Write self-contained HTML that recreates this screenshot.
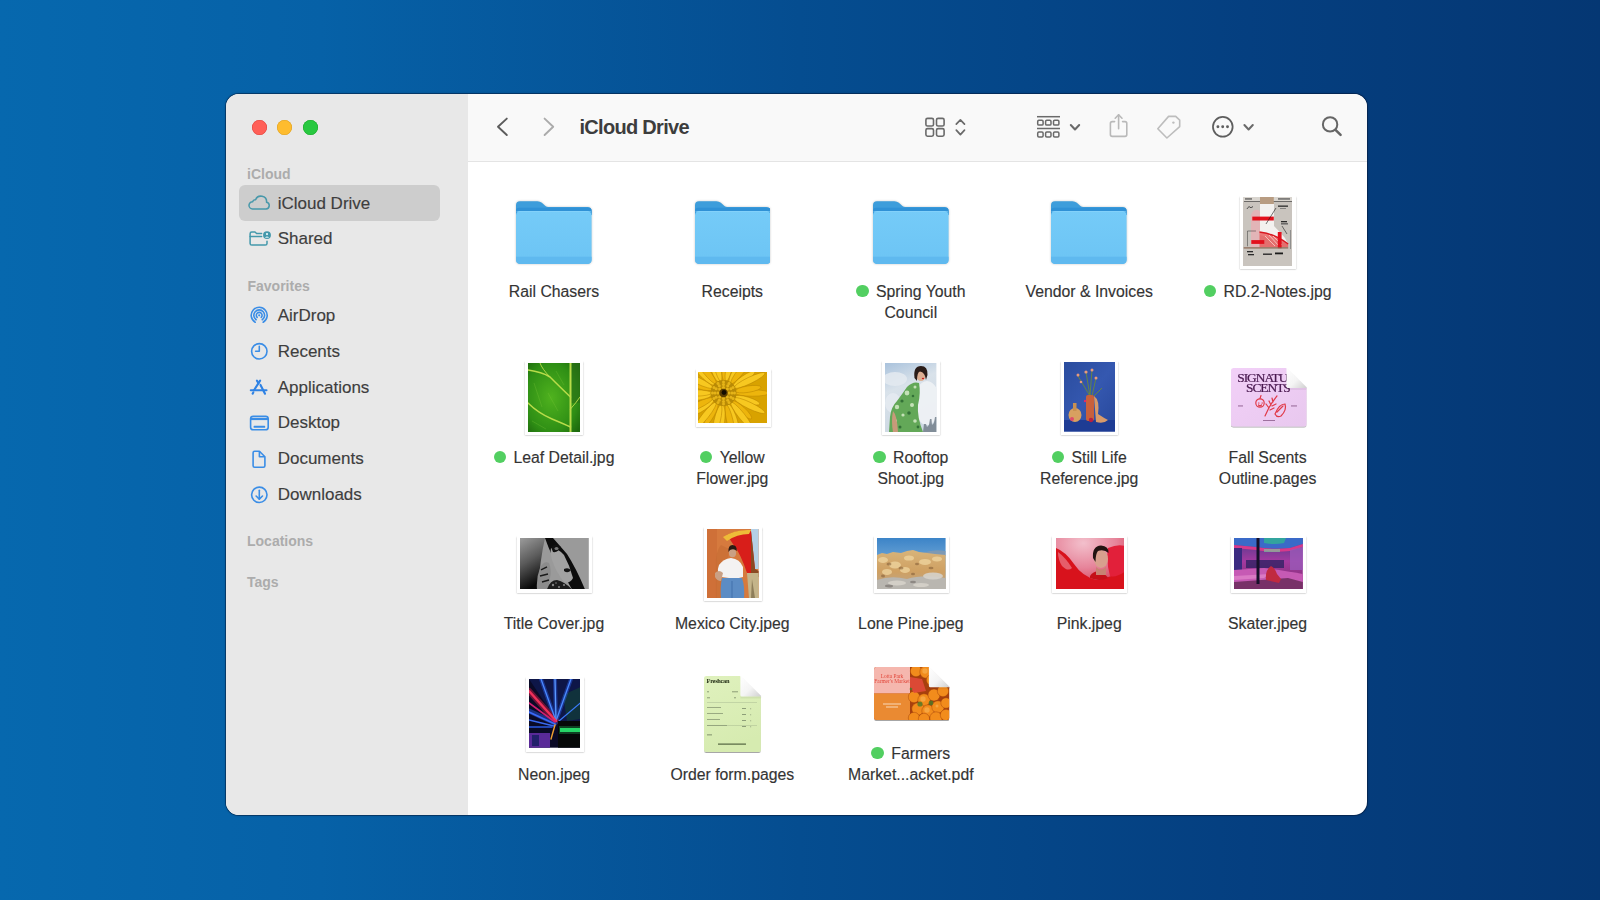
<!DOCTYPE html>
<html><head><meta charset="utf-8"><title>iCloud Drive</title>
<style>
html,body{margin:0;padding:0;width:1600px;height:900px;overflow:hidden;}
body{background:linear-gradient(90deg,#0668ae 0%,#0661a7 20%,#054d90 50%,#053f80 78%,#053773 100%);font-family:"Liberation Sans", sans-serif;position:relative;}
.t{position:absolute;white-space:nowrap;font-family:"Liberation Sans", sans-serif;}
.s{-webkit-text-stroke:0.15px currentColor;}
.abs{position:absolute;}
#win{position:absolute;left:226px;top:94px;width:1141px;height:721px;border-radius:13px;overflow:hidden;background:#fff;box-shadow:0 0 0 1px rgba(5,20,45,.42),0 0 2px 1px rgba(5,20,45,.2);}
#sb{position:absolute;left:0;top:0;width:242px;height:721px;background:#e8e8e8;}
#tb{position:absolute;left:242px;top:0;right:0;height:67px;background:#f9f9f9;border-bottom:1px solid #e4e4e4;}
.ph{position:absolute;background:#fff;box-shadow:0 0.5px 1.5px rgba(0,0,0,.35);}
.ph svg{position:absolute;left:3px;top:3px;}
.dot{position:absolute;width:12.5px;height:12.5px;border-radius:50%;background:#53cf62;}
</style></head><body>
<div id="win"><div id="sb"></div><div id="tb"></div></div><div class="abs" style="left:251.8px;top:119.8px;width:15px;height:15px;border-radius:50%;background:#ff5f57;box-shadow:inset 0 0 0 0.6px #e0443e;"></div><div class="abs" style="left:277.3px;top:119.8px;width:15px;height:15px;border-radius:50%;background:#febc2e;box-shadow:inset 0 0 0 0.6px #dea123;"></div><div class="abs" style="left:302.9px;top:119.8px;width:15px;height:15px;border-radius:50%;background:#28c840;box-shadow:inset 0 0 0 0.6px #1aab29;"></div><div class="abs" style="left:239px;top:185px;width:201px;height:35.5px;border-radius:6px;background:#cdcdcd;"></div><div class="t" style="left:247.00px;top:164.55px;font-size:14px;line-height:18px;color:#acacac;font-weight:700;">iCloud</div><div class="t s" style="left:277.70px;top:192.71px;font-size:17px;line-height:22px;color:#3e3e3e;font-weight:400;">iCloud Drive</div><div class="t s" style="left:277.70px;top:228.41px;font-size:17px;line-height:22px;color:#3e3e3e;font-weight:400;">Shared</div><div class="t" style="left:247.50px;top:276.75px;font-size:14px;line-height:18px;color:#acacac;font-weight:700;">Favorites</div><div class="t s" style="left:277.70px;top:305.41px;font-size:17px;line-height:22px;color:#3e3e3e;font-weight:400;">AirDrop</div><div class="t s" style="left:277.70px;top:341.06px;font-size:17px;line-height:22px;color:#3e3e3e;font-weight:400;">Recents</div><div class="t s" style="left:277.70px;top:376.71px;font-size:17px;line-height:22px;color:#3e3e3e;font-weight:400;">Applications</div><div class="t s" style="left:277.70px;top:412.36px;font-size:17px;line-height:22px;color:#3e3e3e;font-weight:400;">Desktop</div><div class="t s" style="left:277.70px;top:448.01px;font-size:17px;line-height:22px;color:#3e3e3e;font-weight:400;">Documents</div><div class="t s" style="left:277.70px;top:483.66px;font-size:17px;line-height:22px;color:#3e3e3e;font-weight:400;">Downloads</div><div class="t" style="left:247.00px;top:532.35px;font-size:14px;line-height:18px;color:#acacac;font-weight:700;">Locations</div><div class="t" style="left:247.00px;top:572.95px;font-size:14px;line-height:18px;color:#acacac;font-weight:700;">Tags</div><div class="t" style="left:579.50px;top:113.97px;font-size:20px;line-height:26px;color:#3d3d3d;font-weight:700;letter-spacing:-0.7px;">iCloud Drive</div><svg class="abs" style="left:516.20px;top:201.30px;filter:drop-shadow(0 0.6px 0.8px rgba(0,0,0,.22))" width="75.6" height="63.2" viewBox="0 0 76 63.2"><defs><linearGradient id="fb" x1="0" y1="0" x2="0" y2="1"><stop offset="0" stop-color="#75cbf8"/><stop offset="1" stop-color="#6cc4f4"/></linearGradient></defs><path d="M0,4 Q0,0 4,0 H21.5 Q24.2,0 26,1.6 L29.6,4.8 Q30.8,5.8 32.4,5.8 H71.8 Q76,5.8 76,10 V14 H0 Z" fill="#3d9ddb"/><path d="M0,9.5 Q0,6.5 3,6.5 H73 Q76,6.5 76,9.5 V14 H0 Z" fill="#2f91d6"/><rect x="0" y="10" width="76" height="53.2" rx="4.2" fill="url(#fb)"/><path d="M0,55.8 H76 V59 Q76,63.2 71.8,63.2 H4.2 Q0,63.2 0,59 Z" fill="#5fb9ef"/><rect x="0.5" y="10" width="75" height="0.8" fill="#8fd6fb" opacity="0.7"/></svg><svg class="abs" style="left:694.50px;top:201.30px;filter:drop-shadow(0 0.6px 0.8px rgba(0,0,0,.22))" width="75.6" height="63.2" viewBox="0 0 76 63.2"><defs><linearGradient id="fb" x1="0" y1="0" x2="0" y2="1"><stop offset="0" stop-color="#75cbf8"/><stop offset="1" stop-color="#6cc4f4"/></linearGradient></defs><path d="M0,4 Q0,0 4,0 H21.5 Q24.2,0 26,1.6 L29.6,4.8 Q30.8,5.8 32.4,5.8 H71.8 Q76,5.8 76,10 V14 H0 Z" fill="#3d9ddb"/><path d="M0,9.5 Q0,6.5 3,6.5 H73 Q76,6.5 76,9.5 V14 H0 Z" fill="#2f91d6"/><rect x="0" y="10" width="76" height="53.2" rx="4.2" fill="url(#fb)"/><path d="M0,55.8 H76 V59 Q76,63.2 71.8,63.2 H4.2 Q0,63.2 0,59 Z" fill="#5fb9ef"/><rect x="0.5" y="10" width="75" height="0.8" fill="#8fd6fb" opacity="0.7"/></svg><svg class="abs" style="left:873.00px;top:201.30px;filter:drop-shadow(0 0.6px 0.8px rgba(0,0,0,.22))" width="75.6" height="63.2" viewBox="0 0 76 63.2"><defs><linearGradient id="fb" x1="0" y1="0" x2="0" y2="1"><stop offset="0" stop-color="#75cbf8"/><stop offset="1" stop-color="#6cc4f4"/></linearGradient></defs><path d="M0,4 Q0,0 4,0 H21.5 Q24.2,0 26,1.6 L29.6,4.8 Q30.8,5.8 32.4,5.8 H71.8 Q76,5.8 76,10 V14 H0 Z" fill="#3d9ddb"/><path d="M0,9.5 Q0,6.5 3,6.5 H73 Q76,6.5 76,9.5 V14 H0 Z" fill="#2f91d6"/><rect x="0" y="10" width="76" height="53.2" rx="4.2" fill="url(#fb)"/><path d="M0,55.8 H76 V59 Q76,63.2 71.8,63.2 H4.2 Q0,63.2 0,59 Z" fill="#5fb9ef"/><rect x="0.5" y="10" width="75" height="0.8" fill="#8fd6fb" opacity="0.7"/></svg><svg class="abs" style="left:1051.40px;top:201.30px;filter:drop-shadow(0 0.6px 0.8px rgba(0,0,0,.22))" width="75.6" height="63.2" viewBox="0 0 76 63.2"><defs><linearGradient id="fb" x1="0" y1="0" x2="0" y2="1"><stop offset="0" stop-color="#75cbf8"/><stop offset="1" stop-color="#6cc4f4"/></linearGradient></defs><path d="M0,4 Q0,0 4,0 H21.5 Q24.2,0 26,1.6 L29.6,4.8 Q30.8,5.8 32.4,5.8 H71.8 Q76,5.8 76,10 V14 H0 Z" fill="#3d9ddb"/><path d="M0,9.5 Q0,6.5 3,6.5 H73 Q76,6.5 76,9.5 V14 H0 Z" fill="#2f91d6"/><rect x="0" y="10" width="76" height="53.2" rx="4.2" fill="url(#fb)"/><path d="M0,55.8 H76 V59 Q76,63.2 71.8,63.2 H4.2 Q0,63.2 0,59 Z" fill="#5fb9ef"/><rect x="0.5" y="10" width="75" height="0.8" fill="#8fd6fb" opacity="0.7"/></svg><div class="t s" style="left:354.00px;width:400px;text-align:center;top:282.08px;font-size:15.8px;line-height:20.5px;color:#343434;font-weight:400;">Rail Chasers</div><div class="t s" style="left:532.30px;width:400px;text-align:center;top:282.08px;font-size:15.8px;line-height:20.5px;color:#343434;font-weight:400;">Receipts</div><div class="t s" style="left:710.8px;width:400px;text-align:center;top:282.08px;font-size:15.8px;line-height:20.5px;color:#343434;"><span style="display:inline-block;width:12.5px;height:12.5px;border-radius:50%;background:#52cf61;margin-right:7.4px;vertical-align:0px;"></span>Spring Youth</div><div class="t s" style="left:710.80px;width:400px;text-align:center;top:302.58px;font-size:15.8px;line-height:20.5px;color:#343434;font-weight:400;">Council</div><div class="t s" style="left:889.20px;width:400px;text-align:center;top:282.08px;font-size:15.8px;line-height:20.5px;color:#343434;font-weight:400;">Vendor &amp; Invoices</div><div class="t s" style="left:1067.6px;width:400px;text-align:center;top:282.08px;font-size:15.8px;line-height:20.5px;color:#343434;"><span style="display:inline-block;width:12.5px;height:12.5px;border-radius:50%;background:#52cf61;margin-right:7.4px;vertical-align:0px;"></span>RD.2-Notes.jpg</div><div class="t s" style="left:354px;width:400px;text-align:center;top:448.08px;font-size:15.8px;line-height:20.5px;color:#343434;"><span style="display:inline-block;width:12.5px;height:12.5px;border-radius:50%;background:#52cf61;margin-right:7.4px;vertical-align:0px;"></span>Leaf Detail.jpg</div><div class="t s" style="left:532.3px;width:400px;text-align:center;top:448.08px;font-size:15.8px;line-height:20.5px;color:#343434;"><span style="display:inline-block;width:12.5px;height:12.5px;border-radius:50%;background:#52cf61;margin-right:7.4px;vertical-align:0px;"></span>Yellow</div><div class="t s" style="left:532.30px;width:400px;text-align:center;top:468.58px;font-size:15.8px;line-height:20.5px;color:#343434;font-weight:400;">Flower.jpg</div><div class="t s" style="left:710.8px;width:400px;text-align:center;top:448.08px;font-size:15.8px;line-height:20.5px;color:#343434;"><span style="display:inline-block;width:12.5px;height:12.5px;border-radius:50%;background:#52cf61;margin-right:7.4px;vertical-align:0px;"></span>Rooftop</div><div class="t s" style="left:710.80px;width:400px;text-align:center;top:468.58px;font-size:15.8px;line-height:20.5px;color:#343434;font-weight:400;">Shoot.jpg</div><div class="t s" style="left:889.2px;width:400px;text-align:center;top:448.08px;font-size:15.8px;line-height:20.5px;color:#343434;"><span style="display:inline-block;width:12.5px;height:12.5px;border-radius:50%;background:#52cf61;margin-right:7.4px;vertical-align:0px;"></span>Still Life</div><div class="t s" style="left:889.20px;width:400px;text-align:center;top:468.58px;font-size:15.8px;line-height:20.5px;color:#343434;font-weight:400;">Reference.jpg</div><div class="t s" style="left:1067.60px;width:400px;text-align:center;top:448.08px;font-size:15.8px;line-height:20.5px;color:#343434;font-weight:400;">Fall Scents</div><div class="t s" style="left:1067.60px;width:400px;text-align:center;top:468.58px;font-size:15.8px;line-height:20.5px;color:#343434;font-weight:400;">Outline.pages</div><div class="t s" style="left:354.00px;width:400px;text-align:center;top:614.08px;font-size:15.8px;line-height:20.5px;color:#343434;font-weight:400;">Title Cover.jpg</div><div class="t s" style="left:532.30px;width:400px;text-align:center;top:614.08px;font-size:15.8px;line-height:20.5px;color:#343434;font-weight:400;">Mexico City.jpeg</div><div class="t s" style="left:710.80px;width:400px;text-align:center;top:614.08px;font-size:15.8px;line-height:20.5px;color:#343434;font-weight:400;">Lone Pine.jpeg</div><div class="t s" style="left:889.20px;width:400px;text-align:center;top:614.08px;font-size:15.8px;line-height:20.5px;color:#343434;font-weight:400;">Pink.jpeg</div><div class="t s" style="left:1067.60px;width:400px;text-align:center;top:614.08px;font-size:15.8px;line-height:20.5px;color:#343434;font-weight:400;">Skater.jpeg</div><div class="t s" style="left:354.00px;width:400px;text-align:center;top:764.68px;font-size:15.8px;line-height:20.5px;color:#343434;font-weight:400;">Neon.jpeg</div><div class="t s" style="left:532.30px;width:400px;text-align:center;top:764.68px;font-size:15.8px;line-height:20.5px;color:#343434;font-weight:400;">Order form.pages</div><div class="t s" style="left:710.8px;width:400px;text-align:center;top:744.18px;font-size:15.8px;line-height:20.5px;color:#343434;"><span style="display:inline-block;width:12.5px;height:12.5px;border-radius:50%;background:#52cf61;margin-right:7.4px;vertical-align:0px;"></span>Farmers</div><div class="t s" style="left:710.80px;width:400px;text-align:center;top:764.68px;font-size:15.8px;line-height:20.5px;color:#343434;font-weight:400;">Market...acket.pdf</div><div class="ph" style="left:1240.10px;top:196.20px;width:55.60px;height:73.30px;"><div style="position:absolute;left:3.20px;top:1.00px;width:49.20px;height:68.50px;overflow:hidden"><svg style="position:absolute;left:0;top:0;filter:blur(0.35px)" width="49.20" height="68.50" viewBox="0 0 49.20 68.50" preserveAspectRatio="none"><rect width="50" height="69" fill="#c9c4be"/><rect x="0" y="0" width="50" height="4.3" fill="#d9d5cf"/><rect x="1" y="4.2" width="48" height="0.6" fill="#2a2a2a"/><rect x="2" y="1.4" width="7" height="1.1" fill="#444"/><rect x="35" y="1.4" width="12" height="1.1" fill="#444"/><rect x="17" y="0" width="13.8" height="7.5" fill="#b89c82"/><path d="M8,18 Q10,12 15,13 Q18,14 18,20 L18,50.3 H8 Z" fill="#e6b2b6" opacity="0.85"/><path d="M17,7 H31 V29 Q37,35 42,41 L45,47 Q30,42 17,38 Z" fill="#f3f1ef"/><path d="M16.5,35 Q30,36 45.2,47 L45.2,50.3 H16.5 Z" fill="#ea5a5a" opacity="0.8"/><path d="M16.5,35 Q30,36 45.2,47" stroke="#d81820" stroke-width="1.4" fill="none"/><path d="M22,39 L32,49 M26,38 L36,49 M30,39 L39,48" stroke="#f8c8c0" stroke-width="0.9"/><rect x="9.3" y="19.6" width="21.5" height="3.9" fill="#e2101c"/><rect x="8.3" y="43.1" width="13" height="3.8" fill="#e2101c"/><rect x="34.8" y="35" width="3.8" height="16.2" fill="#e2101c"/><rect x="0.7" y="50.3" width="44.5" height="1.2" fill="#8a6650"/><path d="M4.5,49.3 V34 H13" stroke="#333" stroke-width="0.5" fill="none"/><path d="M23,27 L33,11" stroke="#1a1a1a" stroke-width="0.6"/><path d="M4,12 Q6,8 8,11 Q9,9 10,10" stroke="#333" stroke-width="0.8" fill="none"/><rect x="35" y="8.5" width="10" height="1.3" fill="#2a2a2a"/><rect x="37" y="11" width="6" height="0.7" fill="#666"/><rect x="38" y="24" width="6" height="1.3" fill="#2a2a2a"/><rect x="38" y="26.3" width="7" height="1.1" fill="#444"/><path d="M39,29 L44,37" stroke="#222" stroke-width="0.6"/><rect x="4" y="54" width="6" height="1.3" fill="#2a2a2a"/><rect x="5" y="57" width="6" height="1.3" fill="#2a2a2a"/><rect x="20" y="56.5" width="9" height="1.4" fill="#2a2a2a"/><rect x="32" y="55.5" width="8" height="1.8" fill="#1a1a1a"/><rect x="47" y="33" width="0.7" height="19" fill="#777"/></svg></div></div><div class="ph" style="left:525.00px;top:360.60px;width:58.10px;height:74.40px;"><div style="position:absolute;left:3.10px;top:2.20px;width:51.90px;height:68.90px;overflow:hidden"><svg style="position:absolute;left:0;top:0;filter:blur(0.35px)" width="51.90" height="68.90" viewBox="0 0 51.90 68.90" preserveAspectRatio="none"><defs><radialGradient id="lg" cx="0.45" cy="0.5" r="0.7"><stop offset="0" stop-color="#4fb21e"/><stop offset="0.7" stop-color="#2f8f15"/><stop offset="1" stop-color="#1d6a0d"/></radialGradient></defs><rect width="52" height="69" fill="url(#lg)"/><rect x="43" y="0" width="9" height="40" fill="#2a6e18" opacity="0.6"/><g fill="none" stroke="#b9dc4a" stroke-linecap="round"><path d="M42.5,0 V69" stroke-width="2"/><path d="M0,7 Q14,9 22,14 Q34,26 42.5,34" stroke-width="1.5"/><path d="M12,0 Q14,6 22,14" stroke-width="0.9"/><path d="M0,40 Q10,50 24,56 Q36,61 42.5,64" stroke-width="1.5"/><path d="M42.5,46 Q48,40 52,34" stroke-width="0.9"/></g><g fill="none" stroke="#7cc43a" stroke-width="0.4" opacity="0.7"><path d="M6,20 L14,44 M20,30 L30,48 M28,8 L36,22 M4,58 L18,66"/></g></svg></div></div><div class="ph" style="left:695.60px;top:369.40px;width:75.00px;height:57.80px;"><div style="position:absolute;left:2.70px;top:2.30px;width:68.90px;height:51.60px;overflow:hidden"><svg style="position:absolute;left:0;top:0;filter:blur(0.35px)" width="68.90" height="51.60" viewBox="0 0 68.90 51.60" preserveAspectRatio="none"><rect width="69" height="52" fill="#d8a200"/><ellipse cx="54.50" cy="21.00" rx="17.0" ry="3.2" transform="rotate(0.0 54.50 21.00)" fill="#edb50c" stroke="#b98400" stroke-width="0.5"/><ellipse cx="49.43" cy="28.25" rx="13.0" ry="3.2" transform="rotate(16.9 49.43 28.25)" fill="#f7c820" stroke="#b98400" stroke-width="0.5"/><ellipse cx="51.63" cy="33.58" rx="17.0" ry="3.2" transform="rotate(25.7 51.63 33.58)" fill="#f7c820" stroke="#b98400" stroke-width="0.5"/><ellipse cx="43.91" cy="37.91" rx="13.0" ry="3.2" transform="rotate(42.6 43.91 37.91)" fill="#edb50c" stroke="#b98400" stroke-width="0.5"/><ellipse cx="43.58" cy="43.67" rx="17.0" ry="3.2" transform="rotate(51.4 43.58 43.67)" fill="#f7c820" stroke="#b98400" stroke-width="0.5"/><ellipse cx="34.75" cy="44.23" rx="13.0" ry="3.2" transform="rotate(68.3 34.75 44.23)" fill="#f7c820" stroke="#b98400" stroke-width="0.5"/><ellipse cx="31.95" cy="49.27" rx="17.0" ry="3.2" transform="rotate(77.1 31.95 49.27)" fill="#edb50c" stroke="#b98400" stroke-width="0.5"/><ellipse cx="23.76" cy="45.94" rx="13.0" ry="3.2" transform="rotate(94.0 23.76 45.94)" fill="#f7c820" stroke="#b98400" stroke-width="0.5"/><ellipse cx="19.05" cy="49.27" rx="17.0" ry="3.2" transform="rotate(102.9 19.05 49.27)" fill="#f7c820" stroke="#b98400" stroke-width="0.5"/><ellipse cx="13.11" cy="42.71" rx="13.0" ry="3.2" transform="rotate(119.7 13.11 42.71)" fill="#edb50c" stroke="#b98400" stroke-width="0.5"/><ellipse cx="7.42" cy="43.67" rx="17.0" ry="3.2" transform="rotate(128.6 7.42 43.67)" fill="#f7c820" stroke="#b98400" stroke-width="0.5"/><ellipse cx="4.91" cy="35.19" rx="13.0" ry="3.2" transform="rotate(145.4 4.91 35.19)" fill="#f7c820" stroke="#b98400" stroke-width="0.5"/><ellipse cx="-0.63" cy="33.58" rx="17.0" ry="3.2" transform="rotate(154.3 -0.63 33.58)" fill="#edb50c" stroke="#b98400" stroke-width="0.5"/><ellipse cx="0.80" cy="24.85" rx="13.0" ry="3.2" transform="rotate(171.1 0.80 24.85)" fill="#f7c820" stroke="#b98400" stroke-width="0.5"/><ellipse cx="-3.50" cy="21.00" rx="17.0" ry="3.2" transform="rotate(180.0 -3.50 21.00)" fill="#f7c820" stroke="#b98400" stroke-width="0.5"/><ellipse cx="1.57" cy="13.75" rx="13.0" ry="3.2" transform="rotate(196.9 1.57 13.75)" fill="#edb50c" stroke="#b98400" stroke-width="0.5"/><ellipse cx="-0.63" cy="8.42" rx="17.0" ry="3.2" transform="rotate(205.7 -0.63 8.42)" fill="#f7c820" stroke="#b98400" stroke-width="0.5"/><ellipse cx="7.09" cy="4.09" rx="13.0" ry="3.2" transform="rotate(222.6 7.09 4.09)" fill="#f7c820" stroke="#b98400" stroke-width="0.5"/><ellipse cx="7.42" cy="-1.67" rx="17.0" ry="3.2" transform="rotate(231.4 7.42 -1.67)" fill="#edb50c" stroke="#b98400" stroke-width="0.5"/><ellipse cx="16.25" cy="-2.23" rx="13.0" ry="3.2" transform="rotate(248.3 16.25 -2.23)" fill="#f7c820" stroke="#b98400" stroke-width="0.5"/><ellipse cx="19.05" cy="-7.27" rx="17.0" ry="3.2" transform="rotate(257.1 19.05 -7.27)" fill="#f7c820" stroke="#b98400" stroke-width="0.5"/><ellipse cx="27.24" cy="-3.94" rx="13.0" ry="3.2" transform="rotate(274.0 27.24 -3.94)" fill="#edb50c" stroke="#b98400" stroke-width="0.5"/><ellipse cx="31.95" cy="-7.27" rx="17.0" ry="3.2" transform="rotate(282.9 31.95 -7.27)" fill="#f7c820" stroke="#b98400" stroke-width="0.5"/><ellipse cx="37.89" cy="-0.71" rx="13.0" ry="3.2" transform="rotate(299.7 37.89 -0.71)" fill="#f7c820" stroke="#b98400" stroke-width="0.5"/><ellipse cx="43.58" cy="-1.67" rx="17.0" ry="3.2" transform="rotate(308.6 43.58 -1.67)" fill="#edb50c" stroke="#b98400" stroke-width="0.5"/><ellipse cx="46.09" cy="6.81" rx="13.0" ry="3.2" transform="rotate(325.4 46.09 6.81)" fill="#f7c820" stroke="#b98400" stroke-width="0.5"/><ellipse cx="51.63" cy="8.42" rx="17.0" ry="3.2" transform="rotate(334.3 51.63 8.42)" fill="#f7c820" stroke="#b98400" stroke-width="0.5"/><ellipse cx="50.20" cy="17.15" rx="13.0" ry="3.2" transform="rotate(351.1 50.20 17.15)" fill="#edb50c" stroke="#b98400" stroke-width="0.5"/><circle cx="25.5" cy="21" r="13" fill="#b88a06"/><circle cx="31.00" cy="21.00" r="1.5" fill="#e6b418"/><circle cx="29.39" cy="24.89" r="1.5" fill="#e6b418"/><circle cx="25.50" cy="26.50" r="1.5" fill="#e6b418"/><circle cx="21.61" cy="24.89" r="1.5" fill="#e6b418"/><circle cx="20.00" cy="21.00" r="1.5" fill="#e6b418"/><circle cx="21.61" cy="17.11" r="1.5" fill="#e6b418"/><circle cx="25.50" cy="15.50" r="1.5" fill="#e6b418"/><circle cx="29.39" cy="17.11" r="1.5" fill="#e6b418"/><circle cx="34.00" cy="21.00" r="1.5" fill="#e6b418"/><circle cx="32.86" cy="25.25" r="1.5" fill="#e6b418"/><circle cx="29.75" cy="28.36" r="1.5" fill="#e6b418"/><circle cx="25.50" cy="29.50" r="1.5" fill="#e6b418"/><circle cx="21.25" cy="28.36" r="1.5" fill="#e6b418"/><circle cx="18.14" cy="25.25" r="1.5" fill="#e6b418"/><circle cx="17.00" cy="21.00" r="1.5" fill="#e6b418"/><circle cx="18.14" cy="16.75" r="1.5" fill="#e6b418"/><circle cx="21.25" cy="13.64" r="1.5" fill="#e6b418"/><circle cx="25.50" cy="12.50" r="1.5" fill="#e6b418"/><circle cx="29.75" cy="13.64" r="1.5" fill="#e6b418"/><circle cx="32.86" cy="16.75" r="1.5" fill="#e6b418"/><circle cx="36.50" cy="21.00" r="1.5" fill="#e6b418"/><circle cx="35.03" cy="26.50" r="1.5" fill="#e6b418"/><circle cx="31.00" cy="30.53" r="1.5" fill="#e6b418"/><circle cx="25.50" cy="32.00" r="1.5" fill="#e6b418"/><circle cx="20.00" cy="30.53" r="1.5" fill="#e6b418"/><circle cx="15.97" cy="26.50" r="1.5" fill="#e6b418"/><circle cx="14.50" cy="21.00" r="1.5" fill="#e6b418"/><circle cx="15.97" cy="15.50" r="1.5" fill="#e6b418"/><circle cx="20.00" cy="11.47" r="1.5" fill="#e6b418"/><circle cx="25.50" cy="10.00" r="1.5" fill="#e6b418"/><circle cx="31.00" cy="11.47" r="1.5" fill="#e6b418"/><circle cx="35.03" cy="15.50" r="1.5" fill="#e6b418"/><circle cx="25.5" cy="21" r="4.2" fill="#5a3c00"/><circle cx="26.0" cy="20.5" r="2.4" fill="#140c00"/></svg></div></div><div class="ph" style="left:882.20px;top:360.60px;width:57.80px;height:74.40px;"><div style="position:absolute;left:3.10px;top:2.20px;width:51.40px;height:68.90px;overflow:hidden"><svg style="position:absolute;left:0;top:0;filter:blur(0.35px)" width="51.40" height="68.90" viewBox="0 0 51.40 68.90" preserveAspectRatio="none"><defs><linearGradient id="sky" x1="0" y1="0" x2="0.3" y2="1"><stop offset="0" stop-color="#a9c2dc"/><stop offset="0.4" stop-color="#d9e2ea"/><stop offset="1" stop-color="#cdd8e2"/></linearGradient></defs><rect width="51.4" height="69" fill="url(#sky)"/><ellipse cx="42" cy="40" rx="13" ry="22" fill="#eef1f4" opacity="0.95"/><ellipse cx="10" cy="16" rx="12" ry="7" fill="#e4eaf0" opacity="0.85"/><ellipse cx="8" cy="40" rx="8" ry="10" fill="#e8edf2" opacity="0.7"/><path d="M38,69 L39,61 L41,61 L42,64 L44,62 L45,56 L46.5,56 L47,62 L49,60 L50,54 L51.4,54 V69 Z" fill="#6e7a86" opacity="0.8"/><path d="M4,69 L5,54 Q6,44 12,38 Q18,30 22,24 Q28,18 34,20 Q36,30 33,42 Q32,54 38,69 Z" fill="#63a858"/><g fill="#d6ecc8" opacity="0.85"><circle cx="12" cy="44" r="2.2"/><circle cx="22" cy="30" r="2.4"/><circle cx="27" cy="42" r="2"/><circle cx="10" cy="58" r="2"/><circle cx="30" cy="58" r="1.8"/><circle cx="18" cy="52" r="1.6"/><circle cx="30" cy="24" r="1.5"/></g><g fill="#1f5a2a" opacity="0.7"><circle cx="17" cy="38" r="1.6"/><circle cx="24" cy="50" r="1.8"/><circle cx="15" cy="64" r="1.5"/><circle cx="28" cy="33" r="1.3"/><circle cx="33" cy="64" r="1.4"/></g><path d="M8,48 Q12,52 13,69 H8 Q6,58 8,48 Z" fill="#c89a7a"/><ellipse cx="36" cy="12.5" rx="4.6" ry="5.6" fill="#dcae92"/><path d="M29.5,15 Q28,3 36,3 Q43,3 42.5,12 Q41.5,15 41,17 Q40,9 35,8.5 Q32,9 32,18 Z" fill="#2a1c18"/><ellipse cx="38" cy="15.5" rx="1.2" ry="0.8" fill="#c81a1a"/></svg></div></div><div class="ph" style="left:1060.60px;top:360.60px;width:57.70px;height:74.40px;"><div style="position:absolute;left:3.30px;top:1.60px;width:51.40px;height:69.50px;overflow:hidden"><svg style="position:absolute;left:0;top:0;filter:blur(0.35px)" width="51.40" height="69.50" viewBox="0 0 51.40 69.50" preserveAspectRatio="none"><defs><linearGradient id="bl" x1="0" y1="0" x2="1" y2="1"><stop offset="0" stop-color="#2a4c9e"/><stop offset="0.5" stop-color="#3558b0"/><stop offset="1" stop-color="#27479a"/></linearGradient></defs><rect width="51.4" height="69.5" fill="url(#bl)"/><rect x="0" y="58" width="51.4" height="11.5" fill="#1e3c94"/><g stroke="#6a8a3a" stroke-width="0.9" fill="none"><path d="M26,34 L14,14 M26,34 L22,10 M28,34 L32,16 M26,34 L28,8 M30,34 L38,26"/></g><g fill="#e89a7a"><circle cx="14" cy="13" r="1.5"/><circle cx="22" cy="10" r="1.6"/><circle cx="28" cy="8" r="1.5"/><circle cx="32" cy="16" r="1.5"/><circle cx="17" cy="20" r="1.3"/></g><rect x="22" y="33" width="8" height="26" rx="2" fill="#c8603c"/><path d="M30,34 Q36,38 34,52 Q40,56 44,58 Q40,62 32,60 Z" fill="#d89a6a"/><ellipse cx="11" cy="53" rx="6.5" ry="7" fill="#d8a060"/><rect x="9" y="41" width="3.5" height="8" fill="#c89050"/><circle cx="8" cy="57" r="2" fill="#e04a6a"/><circle cx="27" cy="58" r="2.2" fill="#b82040"/><circle cx="21" cy="39" r="1.2" fill="#e02a6a"/></svg></div></div><div class="ph" style="left:516.80px;top:536.00px;width:75.20px;height:57.00px;"><div style="position:absolute;left:3.20px;top:1.80px;width:68.80px;height:51.40px;overflow:hidden"><svg style="position:absolute;left:0;top:0;filter:blur(0.35px)" width="68.80" height="51.40" viewBox="0 0 68.80 51.40" preserveAspectRatio="none"><defs><linearGradient id="tc" x1="0" y1="0" x2="0.3" y2="1"><stop offset="0" stop-color="#9c9c9c"/><stop offset="0.5" stop-color="#5a5a5a"/><stop offset="1" stop-color="#080808"/></linearGradient></defs><rect width="68.8" height="51.4" fill="#9a9a9a"/><path d="M0,0 H25 Q20,22 18,51.4 H0 Z" fill="url(#tc)"/><path d="M25,0 H33 Q40,8 47,16 Q56,30 65,51.4 H52 Q46,40 40,32 Q32,20 25,0 Z" fill="#0c0c0c"/><path d="M31,10 Q38,10 44,17 Q50,28 53,40 Q50,46 44,44 Q36,34 32,22 Q30,15 31,10 Z" fill="#a2a2a2"/><path d="M31,9 Q35,4 41,9 Q38,15 33,14 Z" fill="#111"/><ellipse cx="36.5" cy="10.5" rx="2" ry="1.5" fill="#777"/><path d="M44,31 Q48,29 51,32 Q48,36 44,33 Z" fill="#151515"/><path d="M17,51.4 Q16,40 20,30 Q24,22 29,25 Q32,32 30,40 L28,51.4 Z" fill="#8c8c8c"/><path d="M21,32 L27,29 M20,38 L28,36 M22,44 L29,42" stroke="#1a1a1a" stroke-width="1.4"/><path d="M27,51.4 Q30,42 37,42 Q45,44 52,51.4 Z" fill="#1c1c1c"/><g fill="#bdbdbd" opacity="0.65"><circle cx="33" cy="47" r="1.2"/><circle cx="39" cy="49" r="1"/><circle cx="44" cy="47" r="1.1"/><circle cx="36" cy="45" r="0.8"/></g></svg></div></div><div class="ph" style="left:703.90px;top:526.70px;width:57.80px;height:74.40px;"><div style="position:absolute;left:3.10px;top:2.20px;width:51.60px;height:68.90px;overflow:hidden"><svg style="position:absolute;left:0;top:0;filter:blur(0.35px)" width="51.60" height="68.90" viewBox="0 0 51.60 68.90" preserveAspectRatio="none"><rect width="51.6" height="69" fill="#d67a3e"/><rect x="0" y="0" width="10" height="69" fill="#cf7038"/><rect x="44" y="0" width="7.6" height="40" fill="#b4d0e6"/><path d="M20,6 Q32,0 44,2 L48,40 Q46,44 44,46 L40,44 Q34,26 28,18 Z" fill="#d81e1a"/><path d="M44,2 L48,40 L51.6,42 V48 L44,46 Z" fill="#8a4a24"/><path d="M16,8 Q28,0 44,1 L42,5 Q30,5 20,12 Z" fill="#eebb38"/><path d="M40,44 H51.6 V69 H42 Z" fill="#c4b48a"/><path d="M45,50 L48,69 H44 Z" fill="#6a5a3a" opacity="0.6"/><path d="M9,69 V30 Q10,20 14,16 L22,20 Q20,40 18,69 Z" fill="#c46a34" opacity="0.6"/><ellipse cx="25.5" cy="24" rx="3.6" ry="4.2" fill="#caa084"/><path d="M21.5,23 Q21,16 25.5,16 Q30,16 29.8,22 Q27,19 23,21 Z" fill="#2a1a14"/><path d="M12,36 Q16,30 24,29 Q33,30 36,38 L36,48 Q30,50 22,49 L14,48 Q9,44 12,36 Z" fill="#f4f2f2"/><path d="M15,49 H35 Q38,58 37,69 H14 Q13,58 15,49 Z" fill="#5c8cc4"/><path d="M25,52 V69" stroke="#3c6aa6" stroke-width="0.8"/><path d="M8,44 Q12,40 16,44 L14,52 Q10,52 8,48 Z" fill="#caa084"/></svg></div></div><div class="ph" style="left:874.00px;top:536.00px;width:75.00px;height:57.00px;"><div style="position:absolute;left:3.20px;top:1.80px;width:68.60px;height:51.40px;overflow:hidden"><svg style="position:absolute;left:0;top:0;filter:blur(0.35px)" width="68.60" height="51.40" viewBox="0 0 68.60 51.40" preserveAspectRatio="none"><defs><linearGradient id="ls" x1="0" y1="0" x2="0" y2="1"><stop offset="0" stop-color="#3c84c8"/><stop offset="1" stop-color="#a8cce4"/></linearGradient><linearGradient id="lr" x1="0" y1="0" x2="0" y2="1"><stop offset="0" stop-color="#d8b47a"/><stop offset="0.55" stop-color="#cfa062"/><stop offset="1" stop-color="#b8a690"/></linearGradient></defs><rect width="68.6" height="51.4" fill="url(#ls)"/><path d="M46,15 Q56,11 68.6,13 V18 H46 Z" fill="#8a9aaa" opacity="0.75"/><path d="M0,17 L5,15 L10,16 L16,14 L24,15 L30,13 L36,12 L42,14 L50,15 L58,16 L68.6,17 V51.4 H0 Z" fill="url(#lr)"/><g fill="#f0d6a0" opacity="0.75"><ellipse cx="6" cy="22" rx="5" ry="3"/><ellipse cx="18" cy="27" rx="6" ry="3.5"/><ellipse cx="32" cy="20" rx="5" ry="2.6"/><ellipse cx="48" cy="24" rx="6" ry="3"/><ellipse cx="60" cy="21" rx="5" ry="2.5"/><ellipse cx="10" cy="34" rx="5" ry="3"/><ellipse cx="28" cy="32" rx="5" ry="3"/></g><g fill="#7a5430" opacity="0.5"><ellipse cx="12" cy="26" rx="2.5" ry="1.5"/><ellipse cx="24" cy="30" rx="2.5" ry="1.5"/><ellipse cx="40" cy="26" rx="2" ry="1.2"/><ellipse cx="54" cy="30" rx="2.5" ry="1.3"/><ellipse cx="6" cy="38" rx="2" ry="1.5"/><ellipse cx="36" cy="36" rx="2" ry="1.2"/></g><path d="M0,42 Q14,37 30,41 Q46,36 68.6,40 V51.4 H0 Z" fill="#b9b6b0"/><g fill="#d6d2ca" opacity="0.9"><ellipse cx="56" cy="38" rx="10" ry="3.5"/><ellipse cx="20" cy="45" rx="9" ry="2.5"/><ellipse cx="44" cy="47" rx="8" ry="2"/></g><g fill="#6a6460" opacity="0.55"><ellipse cx="12" cy="48" rx="4" ry="1.5"/><ellipse cx="36" cy="44" rx="3" ry="1.2"/></g></svg></div></div><div class="ph" style="left:1052.00px;top:536.00px;width:75.00px;height:57.00px;"><div style="position:absolute;left:3.50px;top:1.80px;width:68.50px;height:51.40px;overflow:hidden"><svg style="position:absolute;left:0;top:0;filter:blur(0.35px)" width="68.50" height="51.40" viewBox="0 0 68.50 51.40" preserveAspectRatio="none"><defs><radialGradient id="pk" cx="0.4" cy="0.1" r="0.8"><stop offset="0" stop-color="#f3c0cc"/><stop offset="0.6" stop-color="#e6849a"/><stop offset="1" stop-color="#d84a62"/></radialGradient></defs><rect width="68.5" height="51.4" fill="url(#pk)"/><path d="M0,10 Q10,14 18,26 Q26,38 40,42 Q56,40 68.5,30 V51.4 H0 Z" fill="#d8121c"/><path d="M52,10 Q62,6 68.5,8 V34 Q60,40 54,38 Q50,24 52,10 Z" fill="#e2203a"/><path d="M2,14 Q10,20 16,30 Q12,34 6,28 Q2,22 2,14 Z" fill="#f29aac" opacity="0.55"/><path d="M34,38 Q38,32 44,34 Q50,36 52,40 Q44,44 34,40 Z" fill="#c41018"/><ellipse cx="45" cy="21" rx="7" ry="9" fill="#d8a08e"/><path d="M37,20 Q36,8 45,7.5 Q53,8 52.5,15 Q48,11 42,13 Q39.5,16 39.5,24 Z" fill="#221412"/><path d="M40,29 Q45,34 50,29 V37 H40 Z" fill="#c88272"/></svg></div></div><div class="ph" style="left:1230.50px;top:536.00px;width:75.50px;height:57.00px;"><div style="position:absolute;left:3.50px;top:1.80px;width:68.80px;height:51.40px;overflow:hidden"><svg style="position:absolute;left:0;top:0;filter:blur(0.35px)" width="68.80" height="51.40" viewBox="0 0 68.80 51.40" preserveAspectRatio="none"><defs><linearGradient id="sk" x1="0" y1="0" x2="0" y2="1"><stop offset="0" stop-color="#4a3a8a"/><stop offset="0.45" stop-color="#a43aa0"/><stop offset="1" stop-color="#7a2a68"/></linearGradient></defs><rect width="68.8" height="51.4" fill="url(#sk)"/><path d="M0,0 H68.8 V6 L56,10 Q40,12 22,9 L0,7 Z" fill="#3a6ac8"/><path d="M30,0 H52 L50,5 Q40,7 30,5 Z" fill="#30b890" opacity="0.75"/><path d="M0,7 L22,9 Q40,12 56,10 L68.8,6 V9 L56,13 Q40,15 22,12 L0,10 Z" fill="#e83a8a" opacity="0.85"/><path d="M0,10 H8 V34 H0 Z" fill="#3a2a80"/><path d="M56,12 L68.8,9 V32 H56 Z" fill="#9a5ab8" opacity="0.8"/><rect x="30" y="11" width="16" height="3" fill="#70d8a0" opacity="0.6"/><path d="M12,22 H50 V30 H12 Z" fill="#2a2060" opacity="0.75"/><path d="M0,32 L30,30 Q52,33 68.8,36 V51.4 H0 Z" fill="#c65ab4"/><path d="M0,38 L36,36 L30,40 L0,42 Z" fill="#e890d0" opacity="0.6"/><path d="M0,44 Q30,42 54,40 L68.8,44 V51.4 H0 Z" fill="#6a2a5a" opacity="0.85"/><rect x="22.5" y="0" width="3" height="46" fill="#16102a"/><path d="M32,42 Q31,32 37,28 Q41,30 43,36 L47,41 L45,45 Z" fill="#c02a40"/></svg></div></div><div class="ph" style="left:525.90px;top:676.70px;width:57.80px;height:75.00px;"><div style="position:absolute;left:3.00px;top:2.70px;width:51.40px;height:68.70px;overflow:hidden"><svg style="position:absolute;left:0;top:0;filter:blur(0.35px)" width="51.40" height="68.70" viewBox="0 0 51.40 68.70" preserveAspectRatio="none"><rect width="51.4" height="68.7" fill="#0a0a26"/><path d="M0,0 H51.4 V42 L28,42 Z" fill="#0e1648"/><path d="M34,16 L51.4,8 V40 L38,42 Z" fill="#123a3a" opacity="0.8"/><g stroke-linecap="round" fill="none" opacity="0.45"><path d="M12,0 L27,42" stroke="#2a5ae8" stroke-width="4"/><path d="M26,0 L27,42" stroke="#2a5ae8" stroke-width="4"/><path d="M42,0 L27,42" stroke="#2a5ae8" stroke-width="4"/><path d="M0,12 L27,42" stroke="#e0204a" stroke-width="6"/><path d="M0,32 L26,44" stroke="#3060f0" stroke-width="5"/></g><g stroke-linecap="round" fill="none"><path d="M12,0 L27,42" stroke="#4a8aff" stroke-width="1.3"/><path d="M26,0 L27,42" stroke="#5a9aff" stroke-width="1.3"/><path d="M42,0 L27,42" stroke="#4a8aff" stroke-width="1.3"/><path d="M51.4,24 L30,42" stroke="#3a7af8" stroke-width="1.2"/><path d="M0,12 L27,42" stroke="#f0305a" stroke-width="2.4"/><path d="M0,24 L26,43" stroke="#d02070" stroke-width="1.8"/><path d="M0,33 L26,45" stroke="#3a6af8" stroke-width="1.8"/><path d="M0,41 L25,47" stroke="#3a6af0" stroke-width="1.6"/><path d="M0,48 H23" stroke="#2a5ae0" stroke-width="1.4"/><path d="M26,46 L22,60" stroke="#f0a030" stroke-width="1.4"/></g><path d="M29,42 H51.4 V68.7 H29 Z" fill="#060808"/><rect x="31" y="49" width="20.4" height="4" fill="#2ae870" opacity="0.9"/><rect x="30" y="47" width="21.4" height="8" fill="#2ae870" opacity="0.25"/><path d="M0,54 H21 V68.7 H0 Z" fill="#5a2a98"/><rect x="3" y="56" width="7" height="11" fill="#22206a"/></svg></div></div><svg class="abs" style="left:1227.60px;top:365.40px;overflow:visible" width="81.50" height="64.60" viewBox="-3 -3 81.50 64.60"><defs><clipPath id="dc1"><path d="M2.5,0 H55.2 L75.5,20.3 V56.10000000000002 Q75.5,58.60000000000002 73.0,58.60000000000002 H2.5 Q0,58.60000000000002 0,56.10000000000002 V2.5 Q0,0 2.5,0 Z"/></clipPath><linearGradient id="fg1" x1="0" y1="0" x2="1" y2="1"><stop offset="0" stop-color="#ffffff"/><stop offset="0.55" stop-color="#f4f4f4"/><stop offset="1" stop-color="#cfcfcf"/></linearGradient><filter id="ds1" x="-10%" y="-10%" width="120%" height="130%"><feGaussianBlur in="SourceAlpha" stdDeviation="0.7"/><feOffset dy="0.8"/><feComponentTransfer><feFuncA type="linear" slope="0.35"/></feComponentTransfer><feMerge><feMergeNode/><feMergeNode in="SourceGraphic"/></feMerge></filter><linearGradient id="fsg" x1="0" y1="0" x2="1" y2="1"><stop offset="0" stop-color="#f2d0f8"/><stop offset="1" stop-color="#e8c8ee"/></linearGradient></defs><g filter="url(#ds1)"><g clip-path="url(#dc1)"><rect width="76" height="59" fill="url(#fsg)"/><text x="6.2" y="13.6" font-family="Liberation Serif" font-size="13.4" letter-spacing="-1.0" fill="#4a1a50" stroke="#4a1a50" stroke-width="0.25">SIGNATURE</text><text x="15" y="23.6" font-family="Liberation Serif" font-size="13.4" letter-spacing="-1.0" fill="#4a1a50" stroke="#4a1a50" stroke-width="0.25">SCENTS</text><g fill="none" stroke="#e03a48" stroke-width="1.2" stroke-linecap="round"><circle cx="29" cy="35" r="4.2"/><path d="M29,30.5 L30,27.5"/><path d="M27.5,35 h0.5 M31,35 h0.5 M27.5,37 Q29,38.5 30.5,37"/><path d="M34,48 Q38,38 46,28 M38,40 L35,36 M40,37 L38,33 M42,34 L41,30 M39,42 L43,40 M41,38 L45,36"/><path d="M44,46 Q48,36 54,36 Q56,42 50,48 Q46,50 44,46 Z M46,44 L52,38"/></g><rect x="7" y="37.5" width="5" height="0.9" fill="#8a5a8a"/><rect x="60" y="37.5" width="6" height="0.9" fill="#8a5a8a"/><rect x="32" y="52" width="12" height="0.8" fill="#8a5a8a"/><path d="M55.5,20 H75.5 V22 H55.5 Z" fill="#000" opacity="0.05"/></g><path d="M55.5,0 L55.5,18.5 Q55.5,20 57.0,20 L75.5,20 L75.9,19.6 L55.9,-0.4 Z" fill="url(#fg1)"/></g></svg><svg class="abs" style="left:700.70px;top:673.10px;overflow:visible" width="62.90" height="82.10" viewBox="-3 -3 62.90 82.10"><defs><clipPath id="dc2"><path d="M2.5,0 H36.09999999999998 L56.89999999999998,20.8 V73.60000000000002 Q56.89999999999998,76.10000000000002 54.39999999999998,76.10000000000002 H2.5 Q0,76.10000000000002 0,73.60000000000002 V2.5 Q0,0 2.5,0 Z"/></clipPath><linearGradient id="fg2" x1="0" y1="0" x2="1" y2="1"><stop offset="0" stop-color="#ffffff"/><stop offset="0.55" stop-color="#f4f4f4"/><stop offset="1" stop-color="#cfcfcf"/></linearGradient><filter id="ds2" x="-10%" y="-10%" width="120%" height="130%"><feGaussianBlur in="SourceAlpha" stdDeviation="0.7"/><feOffset dy="0.8"/><feComponentTransfer><feFuncA type="linear" slope="0.35"/></feComponentTransfer><feMerge><feMergeNode/><feMergeNode in="SourceGraphic"/></feMerge></filter><linearGradient id="ofg" x1="0" y1="0" x2="0.3" y2="1"><stop offset="0" stop-color="#dff1bd"/><stop offset="1" stop-color="#d6ebb0"/></linearGradient></defs><g filter="url(#ds2)"><g clip-path="url(#dc2)"><rect width="57" height="76" fill="url(#ofg)"/><text x="2.6" y="7.2" font-family="Liberation Serif" font-size="6.4" font-weight="bold" letter-spacing="-0.3" fill="#1f2a12">Freshcan</text><rect x="3" y="15.5" width="2" height="0.7" fill="#6a7a5a"/><rect x="3" y="21.5" width="3" height="0.7" fill="#6a7a5a"/><rect x="28" y="15.5" width="6" height="0.7" fill="#6a7a5a"/><rect x="30" y="21.5" width="2" height="0.7" fill="#6a7a5a"/><rect x="3" y="26.5" width="50" height="0.3" fill="#8a9a7a"/><rect x="3" y="31" width="14" height="0.6" fill="#6f7e60"/><rect x="38" y="32" width="4" height="0.8" fill="#7a8a6a"/><rect x="46" y="32.5" width="1.2" height="0.7" fill="#8a9a7a"/><rect x="3" y="37" width="16" height="0.6" fill="#6f7e60"/><rect x="38" y="38" width="4" height="0.8" fill="#7a8a6a"/><rect x="46" y="38.5" width="1.2" height="0.7" fill="#8a9a7a"/><rect x="3" y="43" width="13" height="0.6" fill="#6f7e60"/><rect x="38" y="44" width="4" height="0.8" fill="#7a8a6a"/><rect x="46" y="44.5" width="1.2" height="0.7" fill="#8a9a7a"/><rect x="3" y="49" width="20" height="0.6" fill="#6f7e60"/><rect x="38" y="50" width="4" height="0.8" fill="#7a8a6a"/><rect x="46" y="50.5" width="1.2" height="0.7" fill="#8a9a7a"/><rect x="3" y="49.5" width="50" height="0.3" fill="#8a9a7a"/><rect x="3" y="58.5" width="5" height="0.8" fill="#6a7a5a"/><rect x="14" y="67.6" width="28" height="1" fill="#3a4a2a"/><path d="M36.39999999999998,20.5 H56.89999999999998 V22.5 H36.39999999999998 Z" fill="#000" opacity="0.05"/></g><path d="M36.39999999999998,0 L36.39999999999998,19.0 Q36.39999999999998,20.5 37.89999999999998,20.5 L56.89999999999998,20.5 L57.299999999999976,20.1 L36.799999999999976,-0.4 Z" fill="url(#fg2)"/></g></svg><svg class="abs" style="left:871.20px;top:664.00px;overflow:visible" width="81.10" height="59.00" viewBox="-3 -3 81.10 59.00"><defs><clipPath id="dc3"><path d="M2.5,0 H54.59999999999991 L75.09999999999991,20.5 V50.5 Q75.09999999999991,53 72.59999999999991,53 H2.5 Q0,53 0,50.5 V2.5 Q0,0 2.5,0 Z"/></clipPath><linearGradient id="fg3" x1="0" y1="0" x2="1" y2="1"><stop offset="0" stop-color="#ffffff"/><stop offset="0.55" stop-color="#f4f4f4"/><stop offset="1" stop-color="#cfcfcf"/></linearGradient><filter id="ds3" x="-10%" y="-10%" width="120%" height="130%"><feGaussianBlur in="SourceAlpha" stdDeviation="0.7"/><feOffset dy="0.8"/><feComponentTransfer><feFuncA type="linear" slope="0.35"/></feComponentTransfer><feMerge><feMergeNode/><feMergeNode in="SourceGraphic"/></feMerge></filter></defs><g filter="url(#ds3)"><g clip-path="url(#dc3)"><rect width="76" height="54" fill="#c8501a"/><rect x="0" y="0" width="36" height="26.5" fill="#f5b7ae"/><rect x="0" y="26.5" width="36" height="27.5" fill="#ea8a32"/><text x="18" y="10.6" text-anchor="middle" font-family="Liberation Serif" font-size="5.4" fill="#e2463a">Lotta Park</text><text x="18" y="15.6" text-anchor="middle" font-family="Liberation Serif" font-size="5.4" fill="#e2463a">Farmer's Market</text><rect x="9" y="36.5" width="18" height="1" fill="#f8d8b8"/><rect x="12" y="39.5" width="12" height="1" fill="#f8d8b8"/><rect x="36" y="0" width="40" height="54" fill="#a8400e"/><g fill="#f28c1c" stroke="#9a3a08" stroke-width="0.4"><circle cx="42" cy="4" r="5.7"/><circle cx="52" cy="5" r="6.2"/><circle cx="58" cy="13" r="5.7"/><circle cx="40" cy="30" r="5.7"/><circle cx="50" cy="33" r="6.2"/><circle cx="60" cy="28" r="6.0"/><circle cx="69" cy="24" r="5.7"/><circle cx="44" cy="42" r="6.2"/><circle cx="54" cy="44" r="6.2"/><circle cx="64" cy="40" r="6.2"/><circle cx="72" cy="36" r="5.2"/><circle cx="40" cy="51" r="5.7"/><circle cx="50" cy="52" r="5.7"/><circle cx="62" cy="51" r="6.2"/><circle cx="72" cy="48" r="5.7"/></g><path d="M36,10 L48,12 L52,24 L40,26 L36,20 Z" fill="#e04a3a" opacity="0.9"/><g fill="#f8b050" opacity="0.7"><circle cx="51" cy="4" r="2.7"/><circle cx="49" cy="32" r="2.7"/><circle cx="53" cy="43" r="2.7"/><circle cx="63" cy="39" r="1.5"/></g><g fill="#4a7a2a" opacity="0.8"><circle cx="46" cy="37" r="2.6"/><circle cx="57" cy="36" r="2.4"/><circle cx="37" cy="22" r="1.3"/></g><path d="M54.899999999999906,20.2 H75.09999999999991 V22.2 H54.899999999999906 Z" fill="#000" opacity="0.05"/></g><path d="M54.899999999999906,0 L54.899999999999906,18.7 Q54.899999999999906,20.2 56.399999999999906,20.2 L75.09999999999991,20.2 L75.49999999999991,19.8 L55.299999999999905,-0.4 Z" fill="url(#fg3)"/></g></svg><svg class="abs" style="left:0;top:0" width="1600" height="900" viewBox="0 0 1600 900"><path d="M252.5,208.9 H266 A3.4,3.4 0 0 0 266.6,202.2 A5.7,5.7 0 0 0 255.6,199.8 A2.8,2.8 0 0 0 252.6,201.8 A3.55,3.55 0 0 0 252.5,208.9 Z" fill="none" stroke="#4898aa" stroke-width="1.55" stroke-linejoin="round"/><g fill="none" stroke="#4398ab" stroke-width="1.5" stroke-linejoin="round" stroke-linecap="round"><path d="M261.6,233.5 H256.6 L255,232 H251.8 Q250.1,232 250.1,233.7 V243.4 Q250.1,245.1 251.8,245.1 H265.3 Q267,245.1 267,243.4 V241.2"/><path d="M250.1,236.6 H261.6"/></g><circle cx="267" cy="235.1" r="3.95" fill="#4398ab"/><circle cx="267" cy="234.1" r="1.15" fill="#dff3f6"/><path d="M264.9,237.7 Q267,235.4 269.1,237.7 Z" fill="#dff3f6"/><g fill="none" stroke="#3a8de6" stroke-width="1.6" stroke-linecap="round"><path d="M255.20,322.23 A8.0,8.0 0 1 1 263.20,322.23"/><path d="M256.10,319.72 A5.4,5.4 0 1 1 262.30,319.72"/><path d="M257.15,317.35 A2.9,2.9 0 1 1 261.25,317.35"/></g><circle cx="259.2" cy="315.3" r="1.1" fill="#3a8de6"/><g fill="none" stroke="#3a8de6" stroke-width="1.6" stroke-linecap="round" stroke-linejoin="round"><circle cx="259.3" cy="351.3" r="7.7"/><path d="M259.3,346.4 V351.3 H255.6"/></g><g fill="none" stroke="#2f82e4" stroke-width="2.1" stroke-linecap="round"><path d="M260.1,380.6 L254,390.2"/><path d="M256.9,380.6 L258.5,383.1"/><path d="M260.5,384.9 L265,393.7"/><path d="M250.8,390.2 H266.5"/><path d="M253.3,392.4 L252.6,393.7"/></g><g fill="none" stroke="#3a8de6" stroke-width="1.6"><rect x="250.6" y="416.2" width="17.6" height="13.6" rx="2.6"/><path d="M250.6,418.9 H268.2" stroke-width="2.4"/></g><rect x="253.6" y="425.8" width="11.6" height="2" rx="0.6" fill="#3a8de6"/><g fill="none" stroke="#3a8de6" stroke-width="1.6" stroke-linejoin="round"><path d="M259.4,451.2 H254.6 Q253.1,451.2 253.1,452.7 V465.8 Q253.1,467.3 254.6,467.3 H263.4 Q264.9,467.3 264.9,465.8 V456.8 Z"/><path d="M259.4,451.2 V456.8 H264.9"/></g><g fill="none" stroke="#3a8de6" stroke-width="1.6" stroke-linecap="round" stroke-linejoin="round"><circle cx="259.3" cy="494.8" r="7.7"/><path d="M259.3,490.3 V499"/><path d="M256.1,496 L259.3,499.1 L262.5,496"/></g><path d="M506.8,118.6 L498,126.8 L506.8,135" fill="none" stroke="#5c5c5c" stroke-width="1.9" stroke-linecap="round" stroke-linejoin="round"/><path d="M544.6,118.6 L553.2,126.8 L544.6,135" fill="none" stroke="#ababab" stroke-width="1.9" stroke-linecap="round" stroke-linejoin="round"/><g fill="none" stroke="#6a6a6a" stroke-width="1.6"><rect x="925.9" y="118.4" width="7.6" height="7.6" rx="1.6"/><rect x="936.5" y="118.4" width="7.6" height="7.6" rx="1.6"/><rect x="925.9" y="128.6" width="7.6" height="7.6" rx="1.6"/><rect x="936.5" y="128.6" width="7.6" height="7.6" rx="1.6"/></g><g fill="none" stroke="#6a6a6a" stroke-width="1.7" stroke-linecap="round" stroke-linejoin="round"><path d="M956.3,124.2 L960.4,119.9 L964.5,124.2"/><path d="M956.3,130.1 L960.4,134.6 L964.5,130.1"/></g><g fill="none" stroke="#6a6a6a" stroke-width="1.5"><path d="M1037,116.7 H1060"/><path d="M1037,128.5 H1060"/><rect x="1037.7" y="120.3" width="5.4" height="4.8" rx="1.2"/><rect x="1037.7" y="132.1" width="5.4" height="4.8" rx="1.2"/><rect x="1045.6" y="120.3" width="5.4" height="4.8" rx="1.2"/><rect x="1045.6" y="132.1" width="5.4" height="4.8" rx="1.2"/><rect x="1053.5" y="120.3" width="5.4" height="4.8" rx="1.2"/><rect x="1053.5" y="132.1" width="5.4" height="4.8" rx="1.2"/></g><path d="M1070.8,125 L1075,129.5 L1079.2,125" fill="none" stroke="#6a6a6a" stroke-width="2" stroke-linecap="round" stroke-linejoin="round"/><g fill="none" stroke="#b9b9b9" stroke-width="1.6" stroke-linecap="round" stroke-linejoin="round"><path d="M1114.6,121.6 H1112.2 Q1110.4,121.6 1110.4,123.4 V134.6 Q1110.4,136.4 1112.2,136.4 H1125 Q1126.8,136.4 1126.8,134.6 V123.4 Q1126.8,121.6 1125,121.6 H1122.6"/><path d="M1118.6,128.8 V114.8"/><path d="M1115.2,118.2 L1118.6,114.8 L1122,118.2"/></g><path d="M1157.8,128.7 L1166.9,138 L1179.7,126.6 V120.2 L1175.7,116.4 H1168.6 Z" fill="none" stroke="#bdbdbd" stroke-width="1.6" stroke-linejoin="round"/><circle cx="1173.4" cy="122.6" r="1.2" fill="#bdbdbd"/><circle cx="1222.8" cy="126.8" r="9.85" fill="none" stroke="#5e5e5e" stroke-width="1.75"/><circle cx="1217.9" cy="126.8" r="1.45" fill="#5e5e5e"/><circle cx="1222.7" cy="126.8" r="1.45" fill="#5e5e5e"/><circle cx="1227.5" cy="126.8" r="1.45" fill="#5e5e5e"/><path d="M1244.4,125 L1248.6,129.5 L1252.8,125" fill="none" stroke="#6a6a6a" stroke-width="2" stroke-linecap="round" stroke-linejoin="round"/><g fill="none" stroke="#666" stroke-linecap="round"><circle cx="1330.1" cy="124.4" r="7.2" stroke-width="2"/><path d="M1335.5,129.8 L1340.6,134.9" stroke-width="2.5"/></g></svg>
</body></html>
